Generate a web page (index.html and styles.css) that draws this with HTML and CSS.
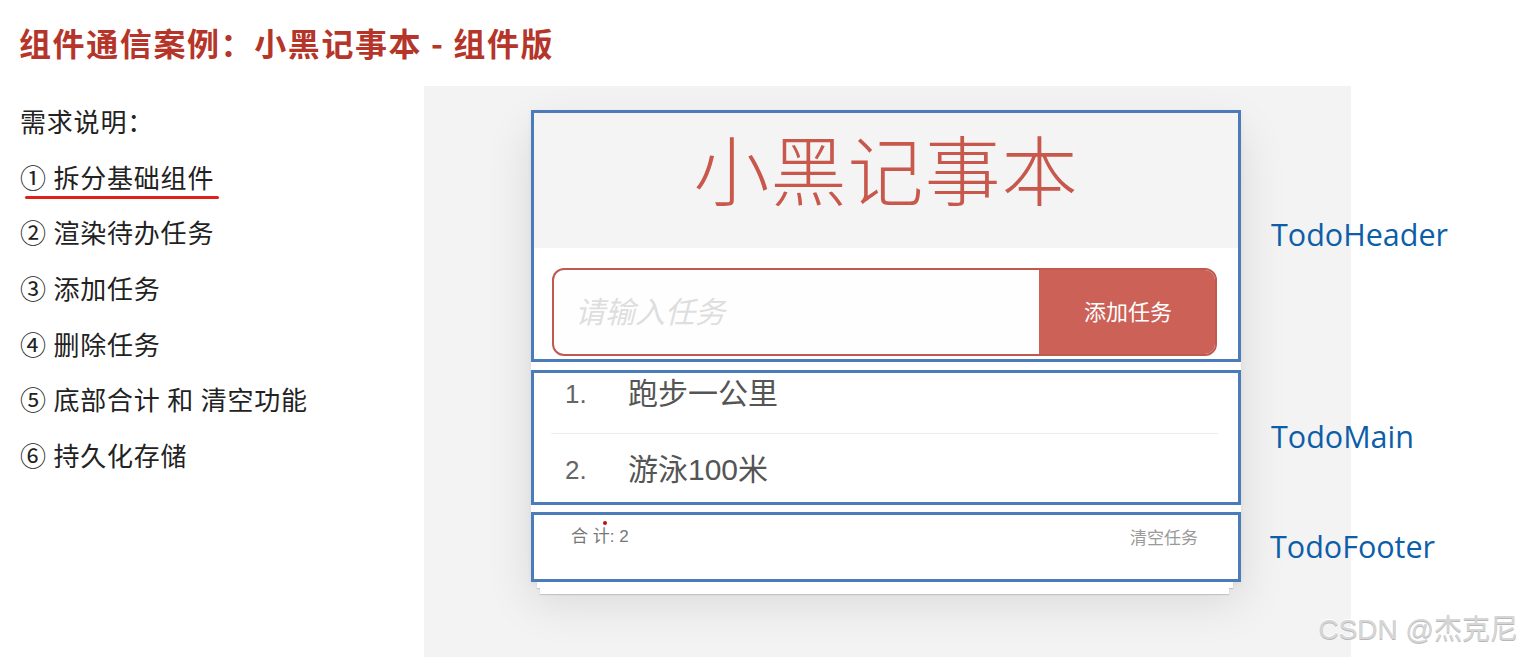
FILE: index.html
```html
<!DOCTYPE html>
<html lang="zh-CN">
<head>
<meta charset="utf-8">
<title>组件通信案例：小黑记事本 - 组件版</title>
<link rel="stylesheet" href="styles.css">
</head>
<body>
<div class="page">
  <h1 class="page-title">组件通信案例：小黑记事本 - 组件版</h1>
  <div class="content">
    <div class="reqs">
      <p class="req-head">需求说明：</p>
      <ol class="req-list">
        <li class="req-item is-marked">① 拆分基础组件</li>
        <li class="req-item">② 渲染待办任务</li>
        <li class="req-item">③ 添加任务</li>
        <li class="req-item">④ 删除任务</li>
        <li class="req-item">⑤ 底部合计 和 清空功能</li>
        <li class="req-item">⑥ 持久化存储</li>
      </ol>
    </div>
    <div class="panel">
      <div class="stage">
        <div class="card-bg"></div>
        <section class="box box-header">
          <div class="app-title">小黑记事本</div>
          <div class="input-row">
            <div class="input-field">请输入任务</div>
            <div class="add-btn">添加任务</div>
          </div>
        </section>
        <div class="label label-header">TodoHeader</div>
        <section class="box box-main">
          <ul class="todo-list">
            <li class="todo-item"><span class="todo-num">1.</span><span class="todo-text">跑步一公里</span></li>
            <li class="todo-item"><span class="todo-num">2.</span><span class="todo-text">游泳100米</span></li>
          </ul>
        </section>
        <div class="label label-main">TodoMain</div>
        <section class="box box-footer">
          <span class="total">合 计: 2</span>
          <span class="clear">清空任务</span>
          <span class="dot"></span>
        </section>
        <div class="label label-footer">TodoFooter</div>
        <div class="stack">
          <div class="sheet sheet-1"></div>
          <div class="sheet sheet-2"></div>
        </div>
      </div>
    </div>
  </div>
  <div class="watermark">CSDN @杰克尼</div>
</div>
</body>
</html>
```

FILE: styles.css
```css
* { box-sizing: border-box; }

html, body {
  margin: 0;
  padding: 0;
  background: #ffffff;
  width: 1522px;
  height: 657px;
  overflow: hidden;
  font-family: "Noto Sans CJK SC", "Noto Sans", sans-serif;
}

.page {
  position: relative;
  width: 1522px;
  height: 657px;
}

.page-title {
  margin: 0;
  height: 86px;
  padding: 21px 0 0 19px;
  font-size: 32px;
  line-height: 42px;
  font-weight: 700;
  color: #b5352a;
  letter-spacing: 1.6px;
}

.content {
  display: flex;
  height: 571px;
}

.reqs {
  width: 424px;
  padding: 7px 0 0 20px;
  color: #222;
  font-size: 26px;
  letter-spacing: 0.8px;
}

.req-head,
.req-list {
  margin: 0;
  padding: 0;
  list-style: none;
}

.req-head,
.req-item {
  height: 55.7px;
  line-height: 55.7px;
}

.req-item {
  position: relative;
}

.is-marked::after {
  content: "";
  position: absolute;
  left: 5px;
  top: 47px;
  width: 194px;
  height: 3px;
  border-radius: 2px;
  background: #e0201a;
}

.panel {
  width: 927px;
  height: 571px;
  background: #f3f3f3;
  padding: 24px 0 0 107px;
}

.stage {
  display: grid;
  grid-template-columns: 710px auto;
  grid-template-rows: 252px 135px 70px auto;
  row-gap: 7.5px;
  column-gap: 30px;
}

.card-bg {
  grid-column: 1;
  grid-row: 1 / 4;
  background: #ffffff;
  box-shadow: 0 20px 44px rgba(0, 0, 0, 0.11), 0 2px 6px rgba(0, 0, 0, 0.05);
}

.box {
  grid-column: 1;
  border: 3px solid #4b7bb9;
  overflow: hidden;
  position: relative;
}

.box-header { grid-row: 1; }
.box-main { grid-row: 2; }
.box-footer { grid-row: 3; }

.label {
  grid-column: 2;
  align-self: center;
  font-family: "Open Sans", "Noto Sans", sans-serif;
  font-size: 30.5px;
  color: #0d5ea8;
  white-space: nowrap;
}

.label-header { grid-row: 1; margin-top: -4px; }
.label-main { grid-row: 2; margin-top: -2px; }
.label-footer { grid-row: 3; margin-left: -1px; margin-top: -2px; }

.app-title {
  height: 135px;
  background: #f4f4f4;
  text-align: center;
  color: #c8574c;
  font-size: 76px;
  font-weight: 300;
  line-height: 108px;
  letter-spacing: 1px;
}

.input-row {
  display: flex;
  margin: 20px 21px 0 18px;
  height: 88px;
  border: 2px solid #c05a50;
  border-radius: 12px;
  overflow: hidden;
  background: #fefefe;
}

.input-field {
  flex: 1;
  padding-left: 21px;
  line-height: 80px;
  font-size: 30px;
  font-style: italic;
  color: #dedede;
}

.add-btn {
  width: 176px;
  background: #cc6157;
  color: #ffffff;
  font-size: 22px;
  line-height: 80px;
  text-align: center;
  padding-left: 2px;
}

.todo-list {
  list-style: none;
  margin: -15px 0 0 0;
  padding: 0;
}

.todo-item {
  margin: 0 20px 0 17px;
  padding: 14px 0 17px 14px;
  line-height: 44px;
  border-bottom: 1px solid #ececec;
  display: flex;
}

.todo-num {
  width: 63px;
  font-family: "Liberation Sans", Arial, sans-serif;
  font-size: 26px;
  color: #666;
}

.todo-text {
  font-family: "Liberation Sans", "Noto Sans CJK SC", sans-serif;
  font-size: 30px;
  color: #555;
}

.box-footer {
  display: flex;
  justify-content: space-between;
  padding: 11px 40px 0 37px;
  line-height: 22px;
}

.total {
  font-family: "Liberation Sans", "Noto Sans CJK SC", sans-serif;
  font-size: 17px;
  color: #777;
}

.clear {
  font-size: 17px;
  color: #999;
}

.dot {
  position: absolute;
  left: 69px;
  top: 6px;
  width: 4px;
  height: 4px;
  border-radius: 50%;
  background: #c0100a;
}

.stack {
  grid-column: 1;
  grid-row: 4;
  margin-top: -7.5px;
}

.sheet {
  background: #ffffff;
  box-shadow: 0 1px 1px rgba(0, 0, 0, 0.14);
}

.sheet-1 {
  height: 6px;
  margin: 0 8px 0 6px;
}

.sheet-2 {
  height: 6px;
  margin: 0 12px 0 9px;
}

.watermark {
  position: absolute;
  right: 4px;
  bottom: 10px;
  font-family: "Liberation Sans", "Noto Sans CJK SC", sans-serif;
  font-size: 28px;
  color: #d6d6d6;
  text-shadow: 0 1px 0 #b8b8b8, 0 -1px 0 #ffffff;
}
```
